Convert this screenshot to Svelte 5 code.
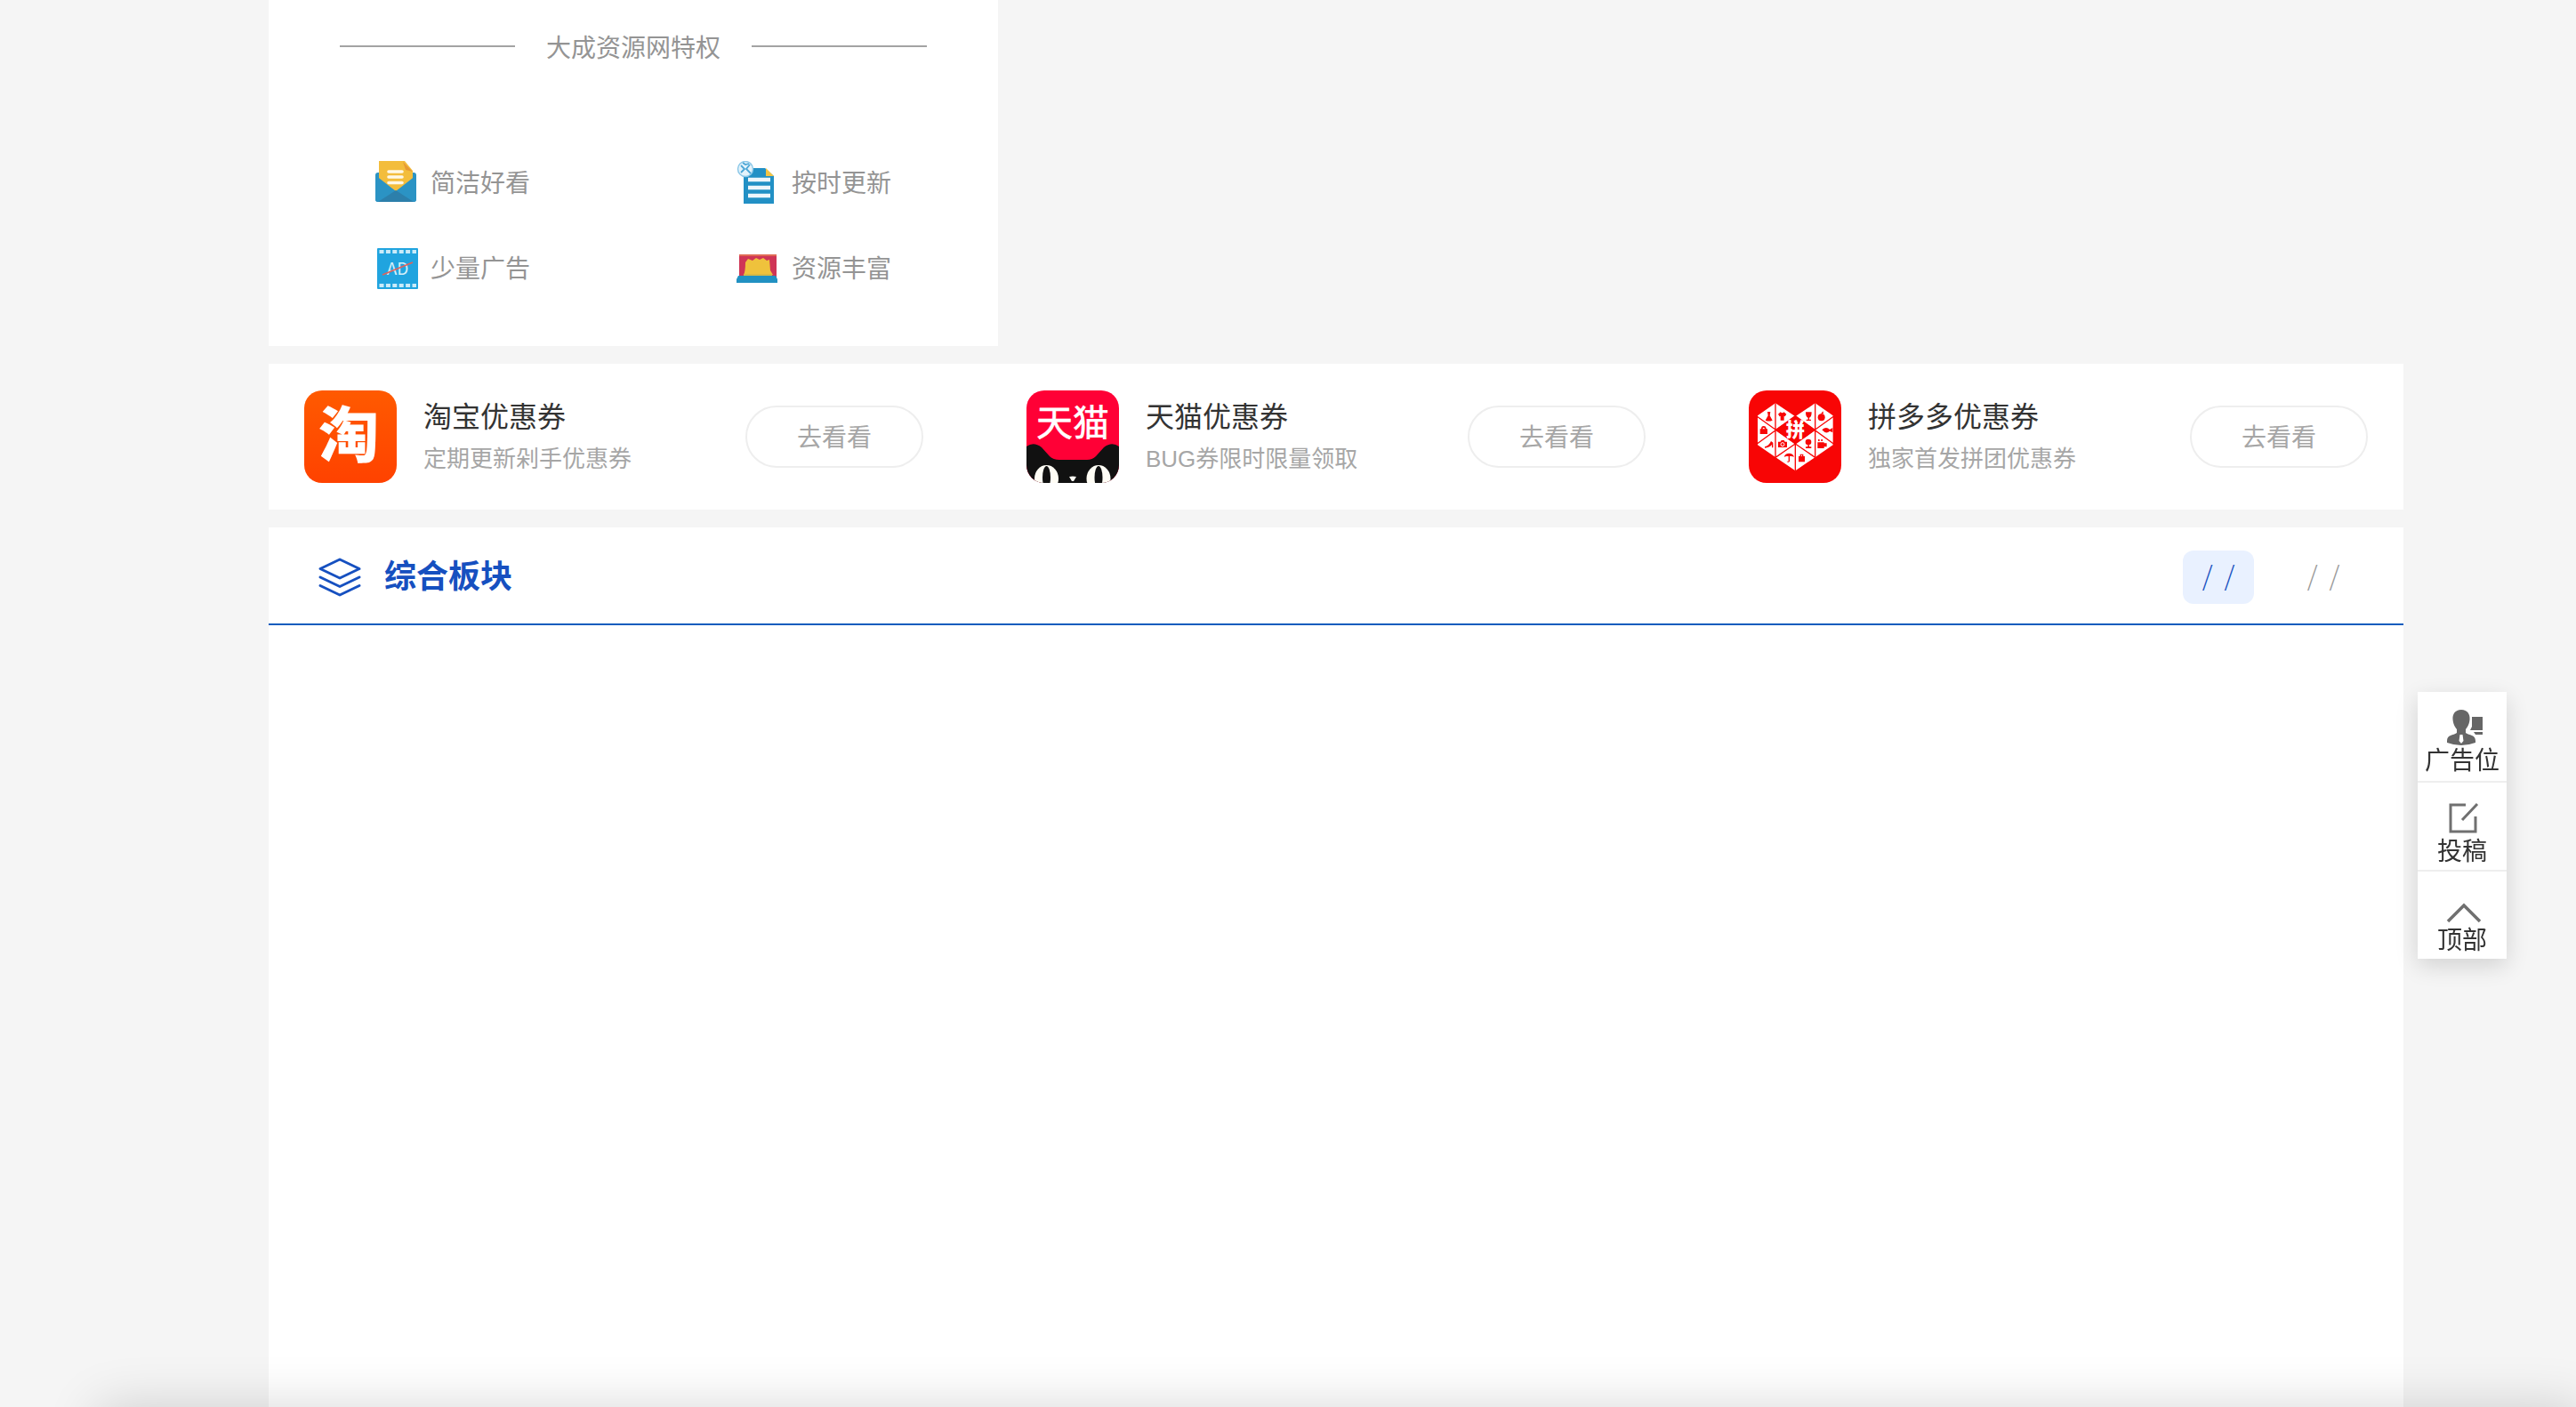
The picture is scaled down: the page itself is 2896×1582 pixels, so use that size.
<script>
  const privileges = [
    { name: '简洁好看', icon: 'mail' },
    { name: '按时更新', icon: 'doc' },
    { name: '少量广告', icon: 'ad' },
    { name: '资源丰富', icon: 'rich' },
  ]

  const coupons = [
    { title: '淘宝优惠券', desc: '定期更新剁手优惠券', logo: 'taobao' },
    { title: '天猫优惠券', desc: 'BUG券限时限量领取', logo: 'tmall' },
    { title: '拼多多优惠券', desc: '独家首发拼团优惠券', logo: 'pdd' },
  ]

  const tabs = [0, 1]
  let activeTab = $state(0)

  function toTop() {
    window.scrollTo({ top: 0, behavior: 'smooth' })
  }
</script>

<div class="page">
  <section class="privilege">
    <h3>大成资源网特权</h3>
    <ul>
      {#each privileges as item}
        <li>
          <svg viewBox="0 0 48 48" aria-hidden="true">
            {#if item.icon === 'mail'}
              <rect x="0" y="13" width="46" height="33" rx="3" fill="#2b93c4" />
              <path d="M4 0H33L42 11V22L23 34L4 22Z" fill="#f3bd3c" />
              <path d="M31 1L42 12L34 10Z" fill="#e79a34" />
              <path d="M0 16L23 34L46 16V43Q46 46 43 46H3Q0 46 0 43Z" fill="#2b93c4" />
              <path d="M3 46L23 33L43 46Z" fill="#2c7fab" />
              <path d="M15 12H30M15 18H30M15 24.500H30" stroke="#fff8e6" stroke-width="3.600" stroke-linecap="round" />
            {:else if item.icon === 'doc'}
              <path d="M8 8H32L42 17V48H8Z" fill="#2290c5" />
              <path d="M33 8L42 17H33Z" fill="#f2c445" />
              <path d="M13 21H38M13 30H38M13 39H38" stroke="#eef6fb" stroke-width="4.400" />
              <circle cx="10" cy="9" r="8.500" fill="#e4f3fb" stroke="#8cc8e8" stroke-width="1.500" />
              <path d="M5 5L9 9L5 13M15 4L11 9L16 14M7 2L10 4L14 3" fill="none" stroke="#4ba6d6" stroke-width="1.800" />
            {:else if item.icon === 'ad'}
              <rect x="2" y="2" width="46" height="46" rx="1" fill="#20a4df" />
              <path d="M4.500 6H46M4.500 44H46" stroke="#c9ebf9" stroke-width="4" stroke-dasharray="5 2.400" />
              <text x="25" y="32" text-anchor="middle" font-size="19" fill="#d3effa">AD</text>
              <path d="M8 32L42 18" stroke="#e0625c" stroke-width="1.800" />
            {:else}
              <rect x="3" y="9" width="42" height="26" fill="#cf3556" />
              <path d="M3 10H45" stroke="#e06a55" stroke-width="2" />
              <path d="M8 32Q10 28 10 18L13 14L18 16L22 13L26 15L30 13L34 16L37 15L38 27L41 32Z" fill="#efc23c" />
              <path d="M8 32H40" stroke="#d9b944" stroke-width="2" />
              <path d="M2 33H44L46 37V41H0V37Z" fill="#2191c2" />
            {/if}
          </svg>
          <span>{item.name}</span>
        </li>
      {/each}
    </ul>
  </section>

  <section class="coupons">
    {#each coupons as item}
      <article>
        <svg class="logo" viewBox="0 0 104 104" aria-hidden="true">
          {#if item.logo === 'taobao'}
            <defs>
              <linearGradient id="orange" x1="0" y1="0" x2="0" y2="1">
                <stop offset="0" stop-color="#ff5a00" />
                <stop offset="1" stop-color="#ff4200" />
              </linearGradient>
            </defs>
            <rect width="104" height="104" fill="url(#orange)" />
            <text x="50" y="75" text-anchor="middle" font-size="68" font-weight="900" fill="#fff">淘</text>
          {:else if item.logo === 'tmall'}
            <rect width="104" height="104" fill="#ff0036" />
            <text x="52" y="51" text-anchor="middle" font-size="41" fill="#fff" stroke="#fff" stroke-width=".600">天猫</text>
            <path d="M0 63Q8 57 17 64L26 74Q30 78 37 78H68Q74 78 78 74L87 64Q96 57 104 63V104H0Z" fill="#111" />
            <ellipse cx="22.500" cy="99" rx="13.500" ry="15" fill="#fffdf5" />
            <ellipse cx="81" cy="99" rx="13.500" ry="15" fill="#fffdf5" />
            <ellipse cx="22.500" cy="98" rx="4.500" ry="13" fill="#111" />
            <ellipse cx="81" cy="98" rx="4.500" ry="13" fill="#111" />
            <path d="M48 97Q52 96 56 97L53 102H51Z" fill="#fffdf5" />
          {:else}
            <rect width="104" height="104" fill="#f80505" />
            <g transform="scale(.3333)">
              <path d="M90 43L157 88L224 43L284 85V184L157 271L30 184V85Z" fill="#fff" />
              <path d="M157 86L226 133L157 180L88 133Z" fill="#f80505" />
              <path
                d="M90 43V226M224 43V226M157 178V271M28 88L157 180L286 88M28 180L157 86L286 180M90 226L157 180L224 226"
                fill="none"
                stroke="#f80505"
                stroke-width="4"
              />
              <text x="157" y="157" text-anchor="middle" font-size="64" font-weight="900" fill="#fff">拼</text>
              <g fill="#f80505">
                <path d="M63 72H73L71 85L80 101Q68 106 56 101L65 85Z" />
                <path d="M99 80L107 73Q113 79 119 73L127 80L122 88L119 86V101H107V86L104 88Z" />
                <path d="M192 73H212Q212 90 204 92V98H210V102H194V98H200V92Q192 90 192 73Z" />
                <circle cx="245" cy="91" r="12" />
                <path d="M242 81L250 70L252 78Z" />
                <path d="M38 130H63V147H38ZM42 130Q42 120 50 120Q59 120 59 130H55Q50 121 46 130Z" />
                <path d="M247 133Q261 119 273 132L283 126V142L273 137Q261 149 247 133Z" />
                <path d="M54 190Q68 187 75 171L82 176V193H78V183Q70 193 54 194Z" />
                <path d="M99 173H107L110 168H119L122 173H129V192H99Z" />
                <circle cx="201" cy="174" r="10" />
                <path d="M199 184H204V190H211V195H192V190H199Z" />
                <path d="M232 175H254V178H263V190H254V195H232ZM234 165H239V171H234ZM244 165H249V171H244Z" />
                <path d="M119 224Q123 212 136 212Q149 212 153 224Q136 219 119 224ZM134 219H138V239Q133 245 128 239H134Z" />
                <path d="M168 222H189V241H168ZM173 222V215H184V222H180V218H177V222Z" />
              </g>
              <circle cx="114" cy="182" r="6" fill="none" stroke="#fff" stroke-width="3" />
            </g>
          {/if}
        </svg>
        <div class="info">
          <h4>{item.title}</h4>
          <p>{item.desc}</p>
        </div>
        <a href="#{item.logo}">去看看</a>
      </article>
    {/each}
  </section>

  <section class="board">
    <header>
      <svg viewBox="0 0 48 44" aria-hidden="true">
        <path d="M24 2L46 12.500L24 23L2 12.500ZM2 22L24 32.500L46 22M2 31.500L24 42L46 31.500" />
      </svg>
      <h2>综合板块</h2>
      <nav>
        {#each tabs as tab}
          <button class:active={tab === activeTab} onclick={() => (activeTab = tab)}>
            <span>/</span>
            <span>/</span>
          </button>
        {/each}
      </nav>
    </header>
  </section>
</div>

<aside>
  <a href="#ad">
    <svg viewBox="-3 0 40 40" aria-hidden="true">
      <path
        d="M16 0C23 0 26 5 25.500 11C25 17 22.500 20 21 22V26C25 29 32 28 32 35V37Q24 40 16 40T0 37V35C0 28 7 29 11 26V22C9.500 20 7 17 6.500 11C6 5 9 0 16 0Z"
        fill="#666"
      />
      <path d="M14.500 28H17.500L18.500 35L16 38L13.500 35Z" fill="#fff" />
      <path d="M28 8H40V23H26L28 19ZM30 25H40V28H32Z" fill="#666" />
    </svg>
    <span>广告位</span>
  </a>
  <a href="#post">
    <svg viewBox="-3 1 40 40" aria-hidden="true">
      <path d="M21 6H4V36H32V19M17 23L34 5" fill="none" stroke="#707070" stroke-width="3" />
    </svg>
    <span>投稿</span>
  </a>
  <button onclick={toTop}>
    <svg viewBox="-4 0 40 40" aria-hidden="true">
      <path d="M0 36L18 18L36 36" fill="none" stroke="#707070" stroke-width="3.500" />
    </svg>
    <span>顶部</span>
  </button>
</aside>

<div class="bottom-shade"></div>

<style>
  :global(body) {
    background: #f5f5f5;
    font-family: 'Noto Sans CJK SC', sans-serif;
    color: #333;
  }

  h2,
  h3,
  h4,
  p,
  ul {
    margin: 0;
    padding: 0;
  }

  a {
    color: inherit;
    text-decoration: none;
  }

  button {
    border: none;
    background: none;
    font: inherit;
    color: inherit;
    cursor: pointer;
  }

  .page {
    box-sizing: border-box;
    min-height: 100vh;
    padding: 0 194px 0 302px;
    display: flex;
    flex-direction: column;
    gap: 20px;
  }

  .privilege {
    box-sizing: border-box;
    width: 820px;
    padding: 32px 80px 64px;
    background: #fff;
    color: #949494;
    font-size: 28px;
    line-height: 40px;
  }

  .privilege h3 {
    display: flex;
    align-items: center;
    gap: 35px;
    font-size: 28px;
    font-weight: 400;
  }

  .privilege h3::before,
  .privilege h3::after {
    content: '';
    flex: 1;
    height: 2px;
    background: #a3a3a3;
  }

  .privilege ul {
    display: grid;
    grid-template-columns: auto auto;
    justify-content: space-between;
    gap: 48px;
    margin-top: 109px;
    padding: 0 40px;
    list-style: none;
  }

  .privilege li {
    display: flex;
    align-items: center;
    gap: 14px;
  }

  .privilege li span {
    padding-bottom: 2px;
  }

  .privilege svg {
    width: 48px;
    height: 48px;
  }

  .coupons {
    display: grid;
    grid-template-columns: repeat(3, 1fr);
    gap: 116px;
    padding: 30px 40px;
    background: #fff;
  }

  .coupons article {
    display: flex;
    align-items: center;
    gap: 30px;
  }

  .logo {
    width: 104px;
    height: 104px;
    border-radius: 20px;
  }

  .info {
    flex: 1;
    padding-top: 2px;
    font-family: 'Liberation Sans', 'Noto Sans CJK SC', sans-serif;
  }

  .info h4 {
    font-size: 32px;
    font-weight: 400;
    line-height: 48px;
  }

  .info p {
    color: #a6a6a6;
    font-size: 26px;
    line-height: 46px;
  }

  .coupons a {
    box-sizing: border-box;
    width: 200px;
    height: 70px;
    border: 2px solid #eee;
    border-radius: 35px;
    color: #a6a6a6;
    font-size: 28px;
    line-height: 64px;
    text-align: center;
  }

  .board {
    flex: 1;
    background: #fff;
  }

  .board header {
    display: flex;
    align-items: center;
    height: 104px;
    padding: 4px 50px 0 56px;
    border-bottom: 2px solid #0f5cbd;
  }

  .board header svg {
    width: 48px;
    height: 44px;
    fill: none;
    stroke: #1650c0;
    stroke-width: 3;
    stroke-linejoin: round;
    stroke-linecap: round;
  }

  .board h2 {
    margin-left: 26px;
    color: #1650c0;
    font-family: 'Liberation Sans', 'Noto Sans CJK SC', sans-serif;
    font-size: 36px;
    line-height: 54px;
  }

  .board nav {
    display: flex;
    gap: 38px;
    margin-left: auto;
  }

  .board nav button {
    display: flex;
    align-items: center;
    justify-content: center;
    gap: 13px;
    width: 80px;
    height: 60px;
    padding: 0 0 6px;
    border-radius: 12px;
    color: #999;
    font-size: 30px;
    font-weight: 300;
  }

  .board nav button.active {
    background: #e9f1ff;
    color: #1650c0;
  }

  aside {
    position: fixed;
    top: 778px;
    right: 78px;
    width: 100px;
    background: #fff;
    box-shadow: 0 8px 24px rgba(0, 0, 0, 0.14);
  }

  aside a,
  aside button {
    box-sizing: border-box;
    display: flex;
    flex-direction: column;
    align-items: center;
    width: 100%;
    height: 100px;
    padding: 20px 0 0;
    font-size: 28px;
    line-height: 30px;
    white-space: nowrap;
  }

  aside > * + * {
    border-top: 2px solid #eee;
  }

  aside svg {
    flex: none;
    width: 40px;
    height: 40px;
    overflow: visible;
  }

  .bottom-shade {
    position: fixed;
    top: 100%;
    left: 110px;
    right: -9px;
    height: 100px;
    box-shadow: 0 0 60px rgba(0, 0, 0, 0.16);
  }
</style>
